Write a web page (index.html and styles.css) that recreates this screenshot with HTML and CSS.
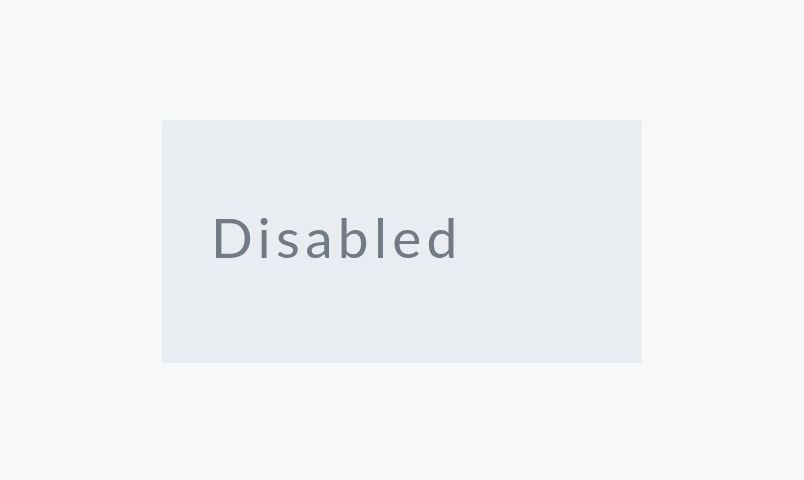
FILE: index.html
```html
<!DOCTYPE html>
<html>
<head>
<meta charset="utf-8">
<link rel="stylesheet" href="styles.css">
</head>
<body>
<div class="stage">
  <button class="btn" disabled>Disabled</button>
</div>
</body>
</html>
```
FILE: styles.css
```css
html, body {
  margin: 0;
  padding: 0;
  background: #f7f8fa;
}
.stage {
  width: 804px;
  height: 480px;
  display: flex;
  justify-content: center;
  align-items: center;
}
.btn {
  box-sizing: border-box;
  width: 480px;
  height: 243px;
  margin-top: 3px;
  background: #e9ecf1;
  border: none;
  border-radius: 2px;
  padding: 0 0 10px 49px;
  text-align: left;
  font-family: Lato, "Open Sans", sans-serif;
  font-size: 55px;
  font-weight: 400;
  letter-spacing: 5.3px;
  color: #717a85;
  cursor: default;
}
```
